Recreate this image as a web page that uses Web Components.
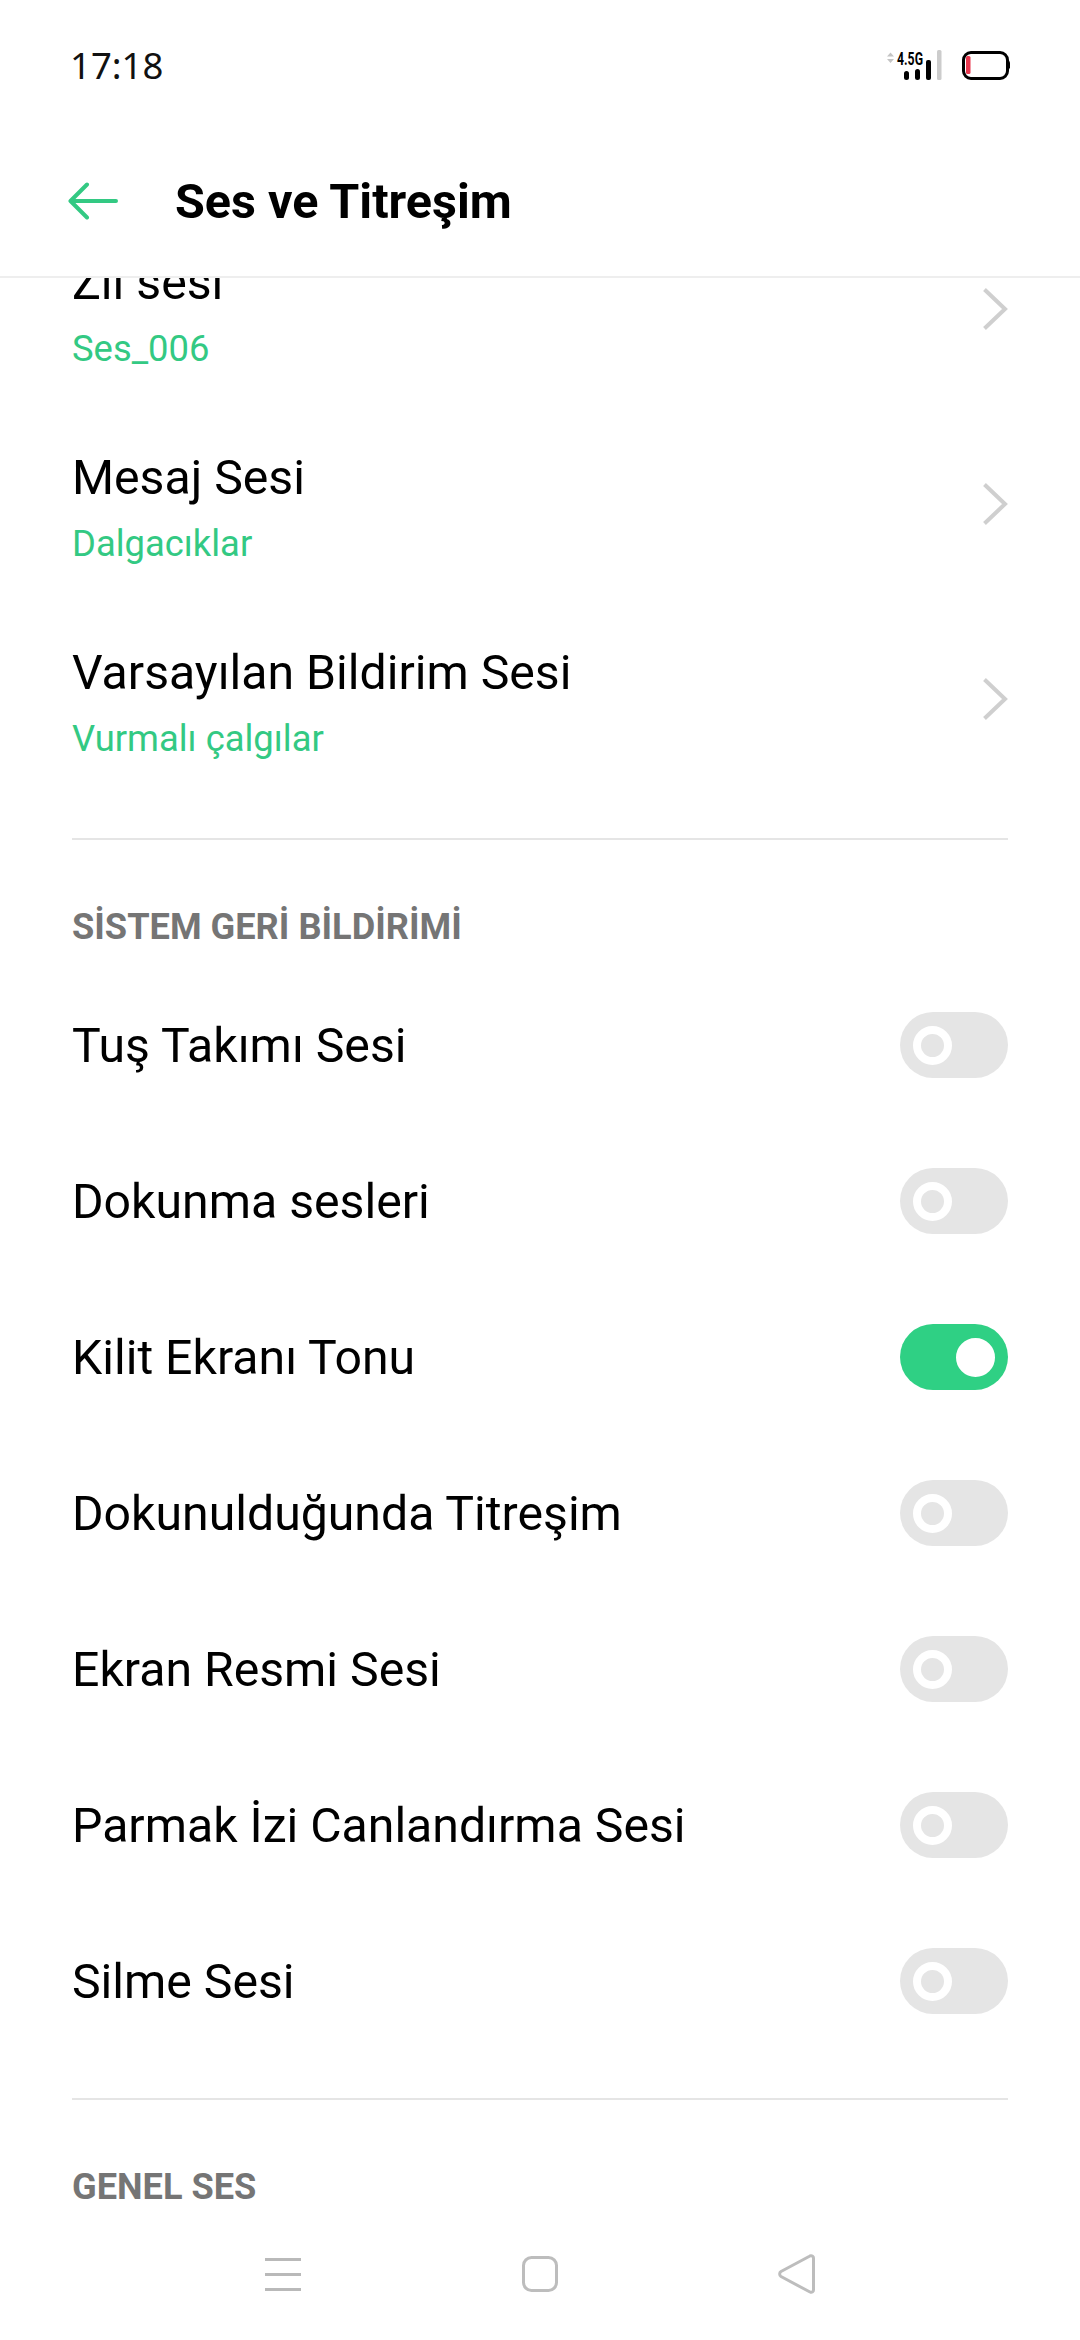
<!DOCTYPE html>
<html lang="tr">
<head>
<meta charset="utf-8">
<title>Ses ve Titreşim</title>
<style>
  html, body { margin: 0; padding: 0; background: #fff; }
  body { font-family: Roboto, "Liberation Sans", sans-serif; }
</style>
</head>
<body>
<settings-screen>
  <status-bar slot="top" time="17:18"></status-bar>
  <app-header slot="top">Ses ve Titreşim</app-header>

  <link-row label="Zil sesi" value="Ses_006"></link-row>
  <link-row label="Mesaj Sesi" value="Dalgacıklar"></link-row>
  <link-row label="Varsayılan Bildirim Sesi" value="Vurmalı çalgılar"></link-row>

  <settings-section heading="SİSTEM GERİ BİLDİRİMİ">
    <toggle-row label="Tuş Takımı Sesi"></toggle-row>
    <toggle-row label="Dokunma sesleri"></toggle-row>
    <toggle-row label="Kilit Ekranı Tonu" on></toggle-row>
    <toggle-row label="Dokunulduğunda Titreşim"></toggle-row>
    <toggle-row label="Ekran Resmi Sesi"></toggle-row>
    <toggle-row label="Parmak İzi Canlandırma Sesi"></toggle-row>
    <toggle-row label="Silme Sesi"></toggle-row>
  </settings-section>

  <settings-section heading="GENEL SES"></settings-section>

  <nav-bar slot="bottom"></nav-bar>
</settings-screen>

<script>
const screenTemplate = document.createElement('template');
screenTemplate.innerHTML = `
  <style>
    :host {
      display: flex;
      flex-direction: column;
      width: 1080px;
      height: 2340px;
      overflow: hidden;
      background: #fff;
      color: #000;
    }
    .list {
      flex: 1;
      min-height: 0;
      overflow: hidden;
    }
    .scrolled { margin-top: -60px; }
  </style>
  <slot name="top"></slot>
  <div class="list"><div class="scrolled"><slot></slot></div></div>
  <slot name="bottom"></slot>
`;

class SettingsScreen extends HTMLElement {
  constructor() {
    super();
    this.attachShadow({ mode: 'open' }).appendChild(screenTemplate.content.cloneNode(true));
  }
}

class StatusBar extends HTMLElement {
  constructor() {
    super();
    this.attachShadow({ mode: 'open' }).innerHTML = `
      <style>
        :host {
          display: flex;
          justify-content: space-between;
          align-items: center;
          height: 92px;
          padding: 40px 70px 0 70px;
          box-sizing: border-box;
        }
        .time { font-family: "Noto Sans", sans-serif; font-size: 36.5px; line-height: 40px; margin-top: -3px; color: #111; }
        svg { display: block; }
      </style>
      <span class="time">${this.getAttribute('time')}</span>
      <svg width="126" height="34" viewBox="884 50 126 34">
        <path d="M887 57.5l3.5-4 3.5 4zM887 60l3.500 4 3.500-4z" fill="#c4c4c4"/>
        <text x="897" y="66" font-family="Roboto, sans-serif" font-weight="700" font-size="18" fill="#000" textLength="26" lengthAdjust="spacingAndGlyphs">4.5G</text>
        <rect x="904" y="72" width="5" height="9" rx="2.5" fill="#000"/>
        <rect x="915" y="70" width="5" height="11" rx="2.5" fill="#000"/>
        <rect x="926" y="61" width="5" height="20" rx="2" fill="#000"/>
        <rect x="937" y="51" width="4.5" height="30" rx="1.5" fill="#ccc"/>
        <rect x="963.5" y="53.5" width="44" height="26" rx="7.5" fill="none" stroke="#000" stroke-width="3"/>
        <path d="M1009 61.5l1 2v5l-1 2z" fill="#000"/>
        <rect x="966" y="57" width="4.5" height="18" rx="1.5" fill="#e8384f"/>
      </svg>
    `;
  }
}

class AppHeader extends HTMLElement {
  constructor() {
    super();
    this.attachShadow({ mode: 'open' }).innerHTML = `
      <style>
        :host {
          display: flex;
          align-items: center;
          gap: 57px;
          height: 186px;
          padding: 34px 0 0 68px;
          box-sizing: border-box;
          border-bottom: 2px solid #eeeeee;
          position: relative;
          z-index: 1;
        }
        svg { display: block; flex: none; }
        .title { font-size: 48.5px; font-weight: 700; color: #000; }
      </style>
      <svg width="50" height="38" viewBox="0 0 50 38">
        <path d="M48 19H3M19 2.500L2.500 19 19 35.500" fill="none" stroke="#33c983" stroke-width="4" stroke-linecap="round" stroke-linejoin="round"/>
      </svg>
      <span class="title"><slot></slot></span>
    `;
  }
}

class LinkRow extends HTMLElement {
  constructor() {
    super();
    this.attachShadow({ mode: 'open' }).innerHTML = `
      <style>
        :host {
          display: flex;
          align-items: center;
          justify-content: space-between;
          height: 195px;
          padding: 0 72px;
        }
        .text { display: flex; flex-direction: column; gap: 18.5px; padding-bottom: 7.5px; }
        .label { font-size: 48.2px; line-height: 55px; color: #000; }
        .value { font-size: 36.4px; line-height: 41px; color: #33c983; }
        svg { display: block; flex: none; margin-bottom: 14px; }
      </style>
      <div class="text">
        <span class="label">${this.getAttribute('label')}</span>
        <span class="value">${this.getAttribute('value')}</span>
      </div>
      <svg width="26" height="44" viewBox="0 0 26 44">
        <path d="M2.500 2.500L23 22 2.500 41.500" fill="none" stroke="#cfcfcf" stroke-width="4"/>
      </svg>
    `;
  }
}

class SettingsSection extends HTMLElement {
  constructor() {
    super();
    this.attachShadow({ mode: 'open' }).innerHTML = `
      <style>
        :host { display: block; }
        .divider { height: 2px; margin: 35px 72px 0; background: #e5e5e5; }
        h2 {
          margin: 0;
          padding: 66px 72px 0;
          font-size: 36.2px;
          line-height: 41px;
          font-weight: 700;
          color: #757575;
        }
        .rows { padding: 20px 0 4px; }
      </style>
      <div class="divider"></div>
      <h2>${this.getAttribute('heading')}</h2>
      <div class="rows"><slot></slot></div>
    `;
  }
}

class ToggleSwitch extends HTMLElement {
  constructor() {
    super();
    this.attachShadow({ mode: 'open' }).innerHTML = `
      <style>
        :host {
          display: flex;
          align-items: center;
          flex: none;
          width: 108px;
          height: 66px;
          padding: 0 13px;
          box-sizing: border-box;
          border-radius: 33px;
          background: #e5e5e5;
        }
        :host([on]) { background: #2fd084; justify-content: flex-end; }
        .knob {
          width: 39px;
          height: 39px;
          box-sizing: border-box;
          border: 8px solid #fff;
          border-radius: 50%;
        }
        :host([on]) .knob { background: #fff; }
      </style>
      <div class="knob"></div>
    `;
  }
}

class ToggleRow extends HTMLElement {
  constructor() {
    super();
    const on = this.hasAttribute('on') ? 'on' : '';
    this.attachShadow({ mode: 'open' }).innerHTML = `
      <style>
        :host {
          display: flex;
          align-items: center;
          justify-content: space-between;
          height: 156px;
          padding: 0 72px;
        }
        .label { font-size: 48.2px; line-height: 55px; color: #000; }
      </style>
      <span class="label">${this.getAttribute('label')}</span>
      <toggle-switch ${on}></toggle-switch>
    `;
  }
}

class NavBar extends HTMLElement {
  constructor() {
    super();
    this.attachShadow({ mode: 'open' }).innerHTML = `
      <style>
        :host {
          display: grid;
          grid-template-columns: repeat(3, 257px);
          justify-items: center;
          align-items: center;
          height: 100px;
          padding: 0 0 32px 154px;
          box-sizing: border-box;
          background: #fff;
          position: relative;
        }
        svg { display: block; }
      </style>
      <svg width="36" height="33" viewBox="0 0 36 33">
        <path d="M0 1.500h36M0 16.500h36M0 31.500h36" stroke="#b9b9b9" stroke-width="3" fill="none"/>
      </svg>
      <svg width="36" height="36" viewBox="0 0 36 36">
        <rect x="1.500" y="1.500" width="33" height="33" rx="8" fill="none" stroke="#bdbdbd" stroke-width="3"/>
      </svg>
      <svg width="37" height="40" viewBox="0 0 37 40">
        <path d="M32.500 1.800a2.400 2.400 0 0 1 3 2.300v31.800a2.400 2.400 0 0 1-3 2.300a3 3 0 0 1-1-.4L3 22.500a3 3 0 0 1 0-5L31.500 2.200a3 3 0 0 1 1-.4z" fill="none" stroke="#bdbdbd" stroke-width="3" stroke-linejoin="round"/>
      </svg>
    `;
  }
}

customElements.define('settings-screen', SettingsScreen);
customElements.define('status-bar', StatusBar);
customElements.define('app-header', AppHeader);
customElements.define('link-row', LinkRow);
customElements.define('settings-section', SettingsSection);
customElements.define('toggle-switch', ToggleSwitch);
customElements.define('toggle-row', ToggleRow);
customElements.define('nav-bar', NavBar);
</script>
</body>
</html>
